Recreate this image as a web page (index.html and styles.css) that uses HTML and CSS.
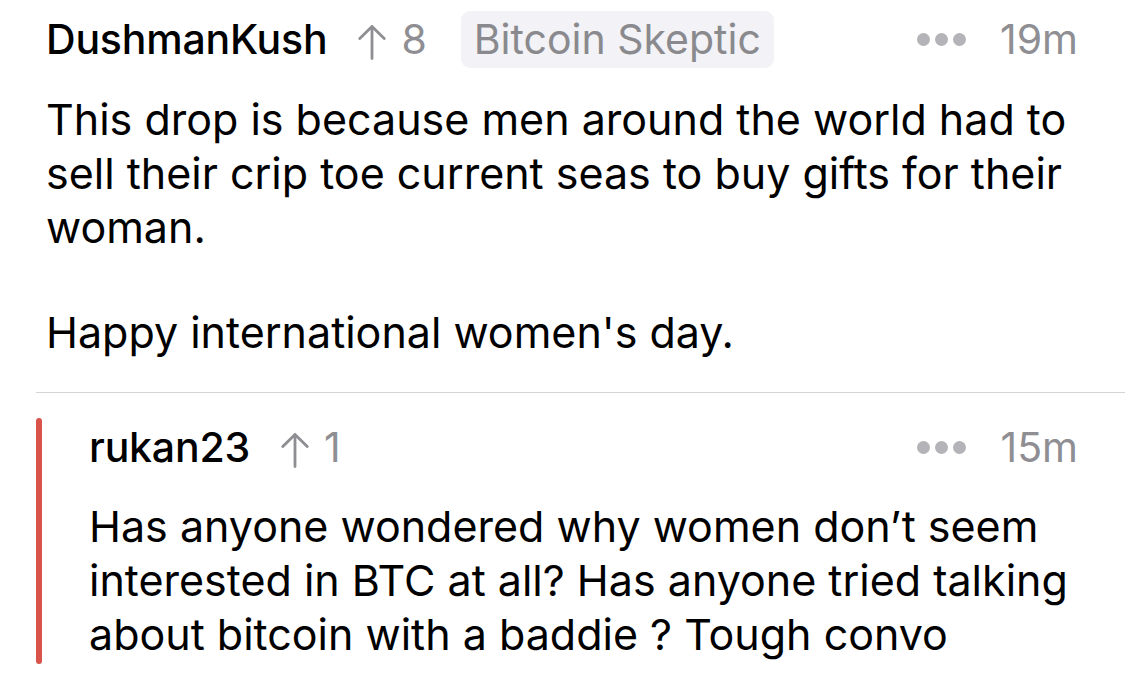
FILE: index.html
```html
<!DOCTYPE html>
<html>
<head>
<meta charset="utf-8">
<link rel="stylesheet" href="styles.css">
</head>
<body>
<div class="thread">
  <div class="comment">
    <div class="header">
      <span class="name">DushmanKush</span>
      <span class="votes">
        <svg class="arrow" viewBox="0 0 28 36" width="28" height="36"><path d="M14 34.5V2.5M1.8 14.5L14 2.5L26.2 14.5" fill="none" stroke="#8e8e93" stroke-width="2.8" stroke-linecap="round" stroke-linejoin="round"/></svg>
        <span class="count">8</span>
      </span>
      <span class="flair">Bitcoin Skeptic</span>
      <span class="spacer"></span>
      <span class="dots"><i></i><i></i><i></i></span>
      <span class="time">19m</span>
    </div>
    <div class="text">
      <p>This drop is because men around the world had to sell their crip toe current seas to buy gifts for their woman.</p>
      <p>Happy international women's day.</p>
    </div>
  </div>
  <div class="divider"></div>
  <div class="reply">
    <div class="bar"></div>
    <div class="reply-content">
      <div class="header">
        <span class="name">rukan23</span>
        <span class="votes">
          <svg class="arrow" viewBox="0 0 28 36" width="28" height="36"><path d="M14 34.5V2.5M1.8 14.5L14 2.5L26.2 14.5" fill="none" stroke="#8e8e93" stroke-width="2.8" stroke-linecap="round" stroke-linejoin="round"/></svg>
          <span class="count">1</span>
        </span>
        <span class="spacer"></span>
        <span class="dots"><i></i><i></i><i></i></span>
        <span class="time">15m</span>
      </div>
      <div class="text">
        <p>Has anyone wondered why women don’t seem interested in BTC at all? Has anyone tried talking about bitcoin with a baddie ? Tough convo</p>
      </div>
    </div>
  </div>
</div>
</body>
</html>
```
FILE: styles.css
```css
* { box-sizing: border-box; }
html, body {
  margin: 0;
  background: #ffffff;
}
body {
  font-family: Inter, "Noto Sans", "Liberation Sans", sans-serif;
  color: #000000;
  width: 1125px;
  height: 687px;
  overflow: hidden;
}
.thread {
  padding-left: 36px;
}
.comment {
  padding: 12px 47px 33px 10px;
}
.header {
  display: flex;
  align-items: center;
  height: 55px;
  font-size: 41px;
  line-height: 55px;
}
.name {
  font-weight: 500;
  letter-spacing: -0.2px;
}
.votes {
  display: flex;
  align-items: center;
  margin-left: 31px;
  color: #8e8e93;
}
.arrow {
  display: block;
  margin-top: 4px;
}
.count {
  margin-left: 15px;
}
.flair {
  margin-left: 34px;
  background: #f2f2f7;
  color: #8a8a8e;
  border-radius: 9px;
  padding: 0 13px;
  height: 57px;
  line-height: 57px;
}
.spacer {
  flex: 1;
}
.dots {
  display: flex;
  gap: 5px;
  margin-right: 34px;
}
.dots i {
  display: block;
  width: 13px;
  height: 13px;
  border-radius: 50%;
  background: #b4b4b8;
}
.time {
  color: #8e8e93;
}
.text {
  margin-top: 25px;
  margin-right: -12px;
  font-size: 43px;
  line-height: 54px;
}
.text p {
  margin: 0;
}
.text p + p {
  margin-top: 51px;
}
.divider {
  height: 1px;
  background: #d4d4d8;
}
.reply {
  display: flex;
  margin-top: 25px;
}
.bar {
  width: 6px;
  border-radius: 3px;
  background: #d9534a;
  flex-shrink: 0;
}
.reply-content {
  flex: 1;
  padding: 2px 47px 3px 47px;
}
.reply-content .text {
  margin-top: 24px;
  margin-right: -17px;
}
```
